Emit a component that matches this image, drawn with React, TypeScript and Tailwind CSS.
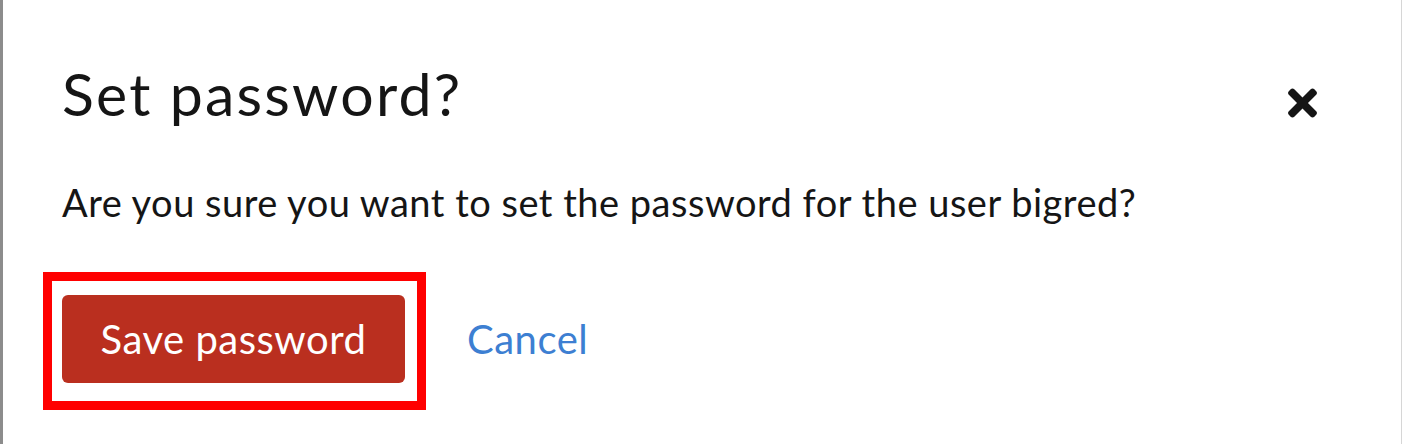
import React from 'react';

const TimesIcon: React.FC<{ className?: string }> = ({ className }) => (
  <svg viewBox="0 0 352 512" className={className} fill="currentColor" aria-hidden="true">
    <path d="M242.72 256l100.07-100.07c12.28-12.28 12.28-32.19 0-44.48l-22.24-22.24c-12.28-12.28-32.19-12.28-44.48 0L176 189.28 75.93 89.21c-12.28-12.28-32.19-12.28-44.48 0L9.21 111.45c-12.28 12.28-12.28 32.19 0 44.48L109.28 256 9.21 356.07c-12.28 12.28-12.28 32.19 0 44.48l22.24 22.24c12.28 12.28 32.2 12.28 44.48 0L176 322.72l100.07 100.07c12.28 12.28 32.2 12.28 44.48 0l22.24-22.24c12.28-12.28 12.28-32.19 0-44.48L242.72 256z" />
  </svg>
);

const App: React.FC = () => {
  return (
    <div
      className="w-[1402px] h-[444px] bg-white border-l-[3px] border-l-[#8c8c8c] border-r border-r-[#d6d6d6] pl-[59px] pr-[84px] overflow-hidden"
      style={{ fontFamily: 'Lato, "Open Sans", sans-serif' }}
    >
      <div className="flex items-start justify-between pt-[58px]">
        <h1 className="text-[59px] leading-[72px] font-normal tracking-[2.2px] text-[#151515]">Set password?</h1>
        <button className="mt-[24px] text-[#151515]">
          <TimesIcon className="w-[29px] h-[42px]" />
        </button>
      </div>

      <p className="mt-[48px] text-[38px] leading-[48px] tracking-[0.5px] text-[#151515]">
        Are you sure you want to set the password for the user bigred?
      </p>

      <div className="flex items-center gap-[62px] mt-[69px]">
        <div className="relative">
          <span className="absolute -left-[19px] -top-[23px] -right-[21px] -bottom-[27px] border-[9px] border-[#ff0000] pointer-events-none" />
          <button className="w-[343px] h-[88px] rounded-[6px] bg-[#ba2f1f] text-white text-[40px] leading-none tracking-[0.5px]">
            Save password
          </button>
        </div>
        <button className="text-[40px] leading-none tracking-[0.5px] text-[#3d7fd2]">Cancel</button>
      </div>
    </div>
  );
};

export default App;
